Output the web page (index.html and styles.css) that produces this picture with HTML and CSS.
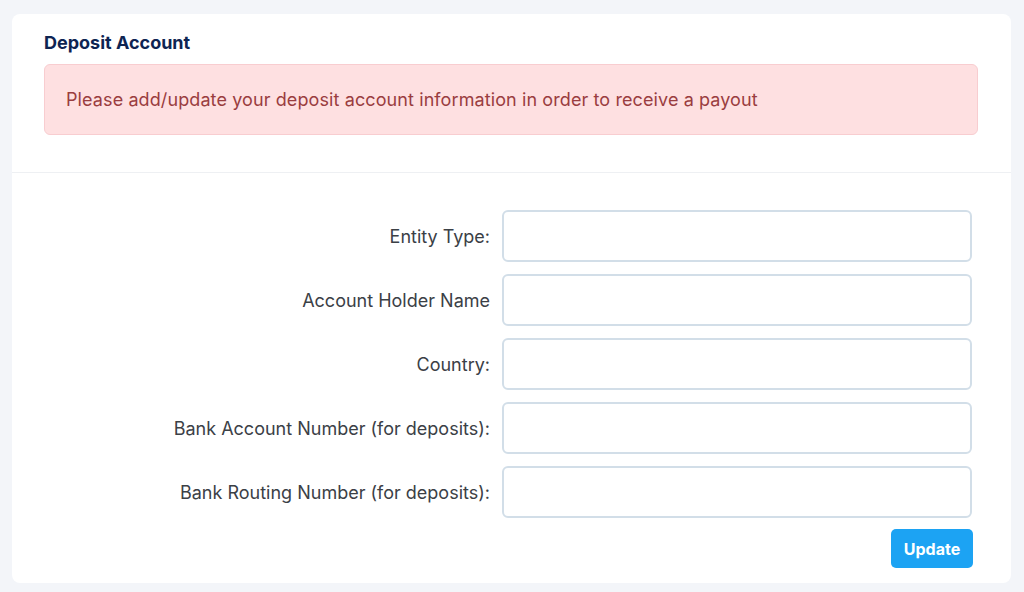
FILE: index.html
```html
<!DOCTYPE html>
<html>
<head>
<meta charset="utf-8">
<link rel="stylesheet" href="styles.css">
</head>
<body>
<div class="card">
  <div class="card-head">
    <h2 class="title">Deposit Account</h2>
    <div class="alert">Please add/update your deposit account information in order to receive a payout</div>
  </div>
  <form class="card-body">
    <div class="row"><label class="lbl">Entity Type:</label><input class="inp" type="text"></div>
    <div class="row"><label class="lbl">Account Holder Name</label><input class="inp" type="text"></div>
    <div class="row"><label class="lbl">Country:</label><input class="inp" type="text"></div>
    <div class="row"><label class="lbl">Bank Account Number (for deposits):</label><input class="inp" type="text"></div>
    <div class="row"><label class="lbl">Bank Routing Number (for deposits):</label><input class="inp" type="text"></div>
    <div class="actions"><button class="btn" type="button">Update</button></div>
  </form>
</div>
</body>
</html>
```
FILE: styles.css
```css
html, body { margin: 0; padding: 0; }
body {
  background: #f3f5f9;
  font-family: Inter, "Noto Sans", sans-serif;
  padding: 14px 13px 0 12px;
}
.card {
  background: #fff;
  border-radius: 8px;
  height: 569px;
  box-sizing: border-box;
}
.card-head {
  padding: 19px 33px 37px 32px;
  border-bottom: 1px solid #eef0f3;
}
.title {
  margin: 0 0 11px 0;
  font-size: 18px;
  line-height: 20px;
  font-weight: 700;
  color: #0e2452;
}
.alert {
  background: #fee0e1;
  border: 1px solid #f8cdd0;
  border-radius: 6px;
  height: 71px;
  box-sizing: border-box;
  display: flex;
  align-items: center;
  padding: 0 21px;
  color: #9a3d3f;
  font-size: 18px;
  letter-spacing: 0.1px;
}
.card-body {
  margin: 0;
  padding: 37px 39px 15px 12px;
  display: flex;
  flex-direction: column;
  gap: 12px;
}
.row {
  display: flex;
  align-items: center;
  gap: 12px;
}
.lbl {
  flex: 1;
  text-align: right;
  font-size: 18px;
  color: #3b4046;
}
.inp {
  width: 470px;
  height: 52px;
  box-sizing: border-box;
  border: 2px solid #d2dee8;
  border-radius: 6px;
  margin: 0;
  padding: 0 12px;
  font: inherit;
}
.actions {
  display: flex;
  justify-content: flex-end;
  margin-top: -1px;
}
.btn {
  width: 82px;
  height: 39px;
  background: #1ca3f3;
  color: #fff;
  border: 0;
  border-radius: 5px;
  font-family: inherit;
  font-size: 16px;
  font-weight: 700;
  margin-right: -1px;
}
```
